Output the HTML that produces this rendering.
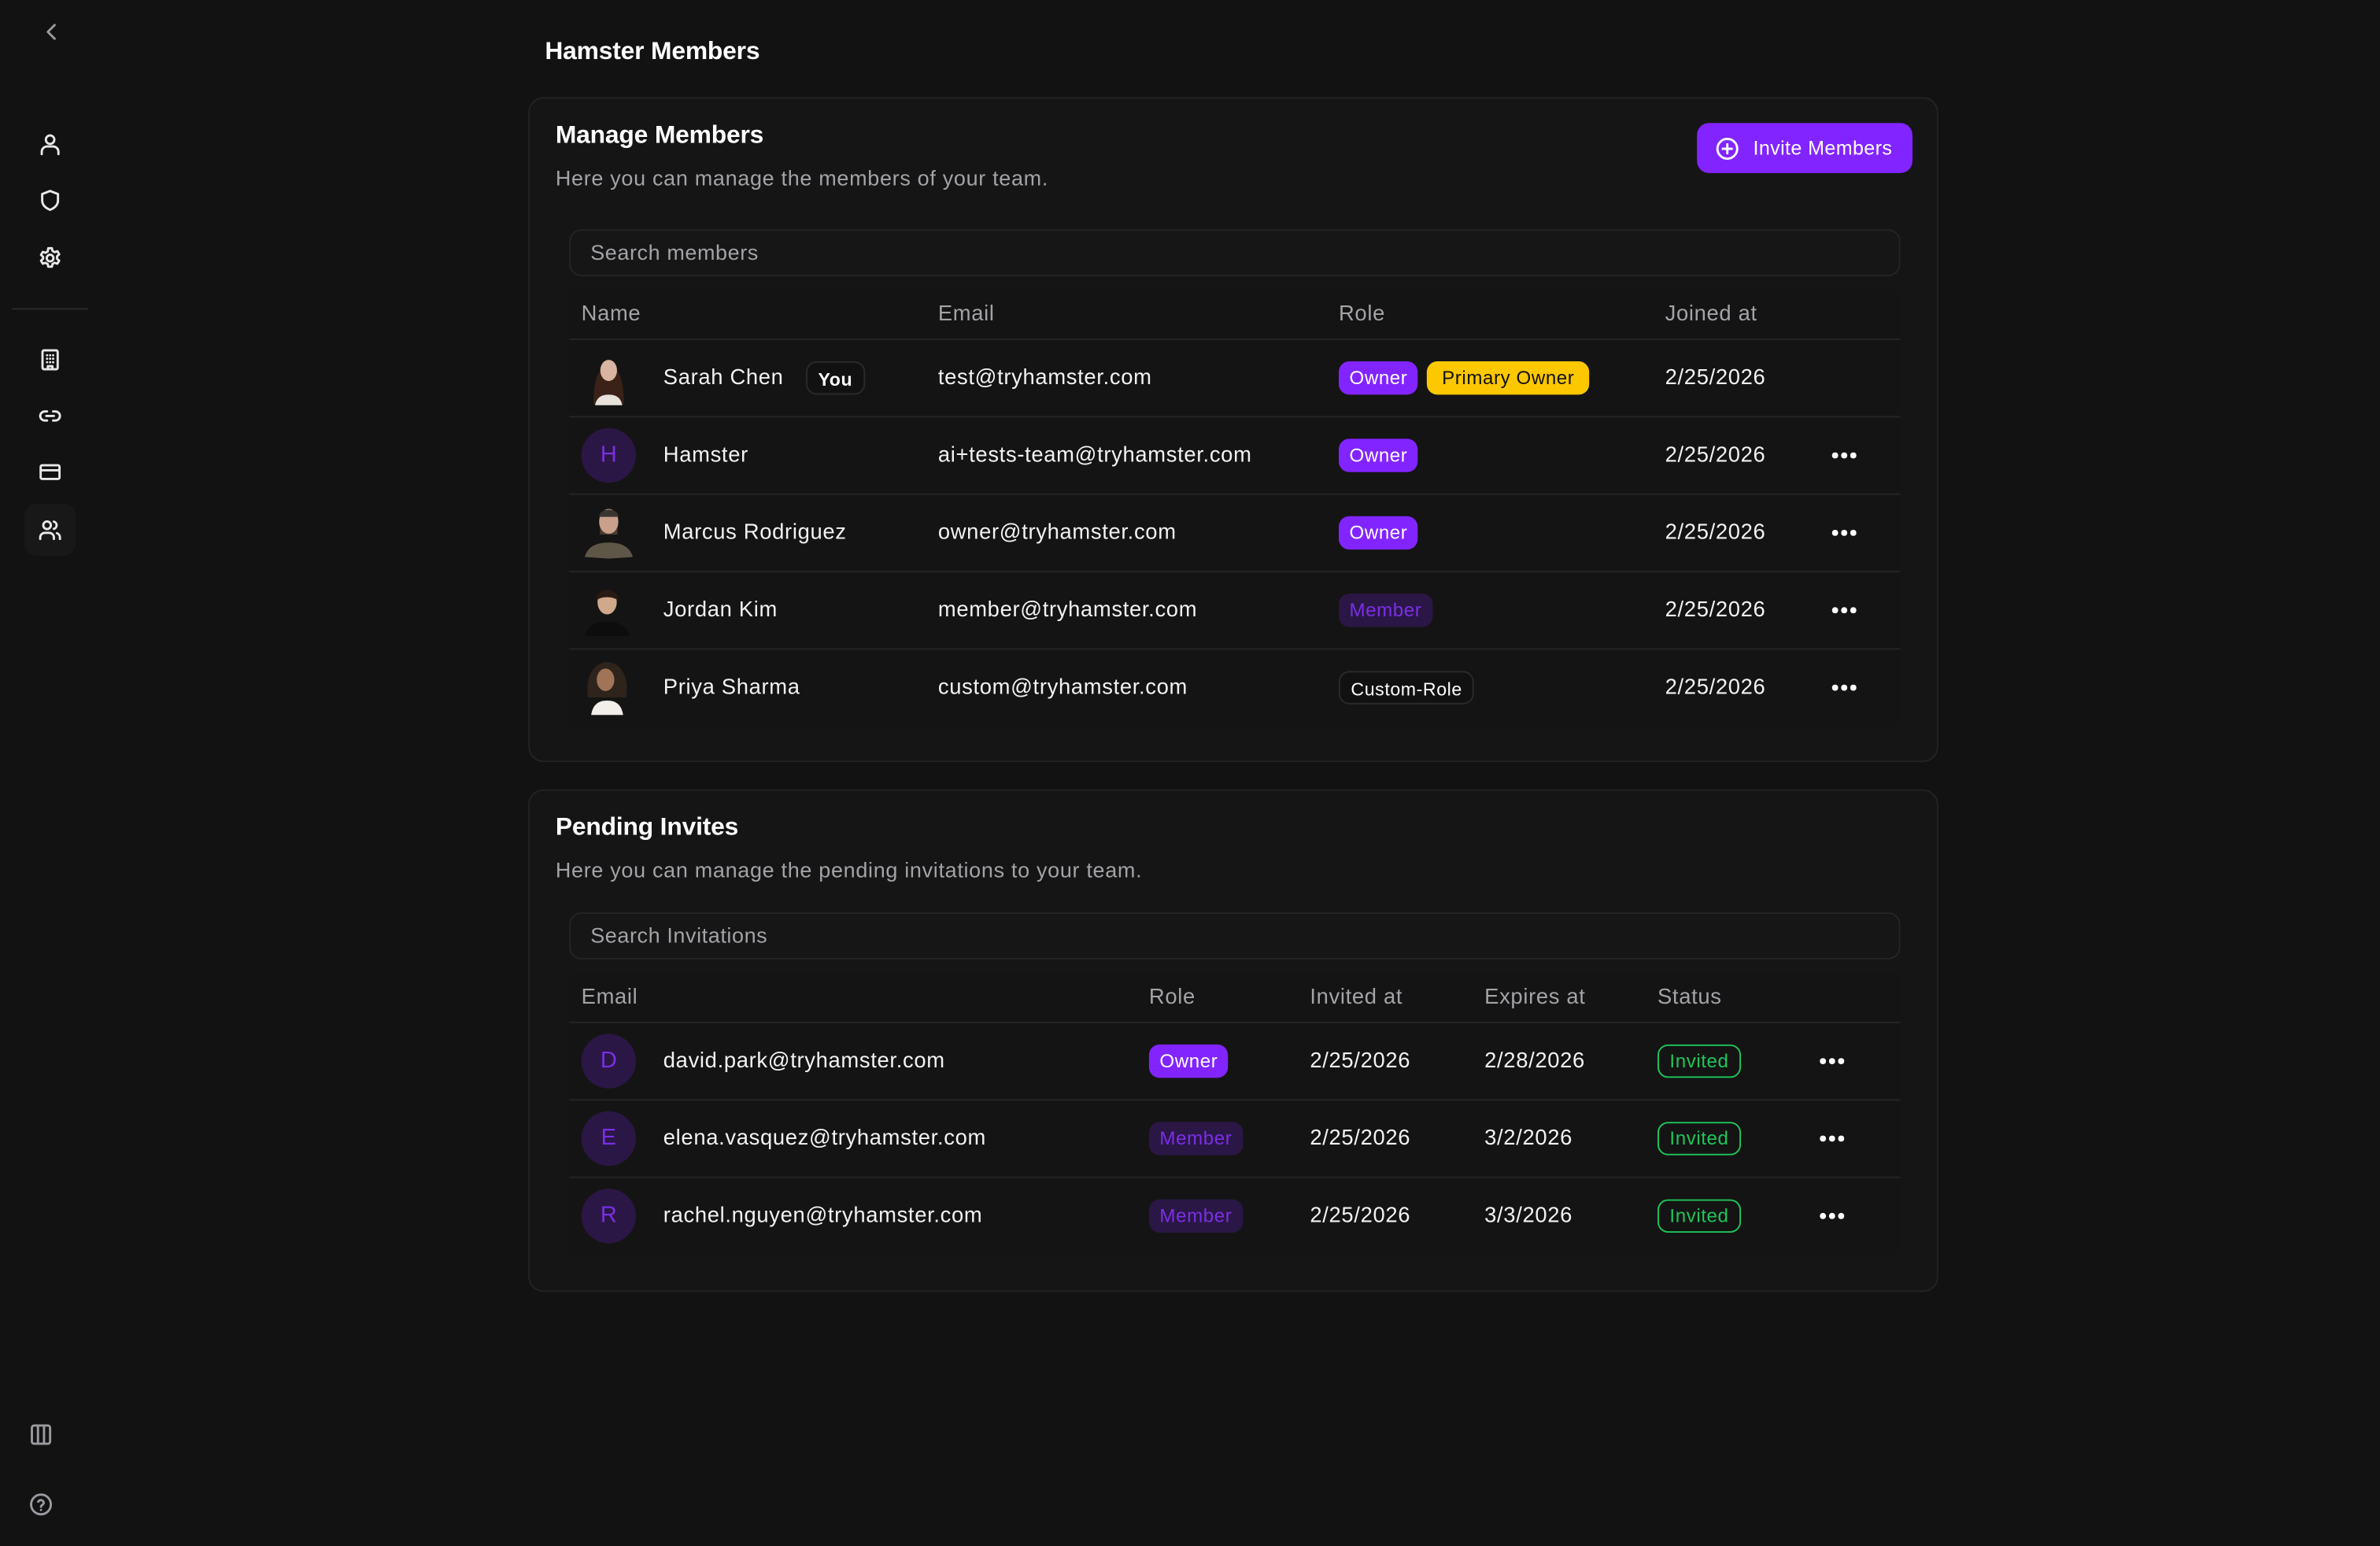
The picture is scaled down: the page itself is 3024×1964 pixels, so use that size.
<!DOCTYPE html>
<html><head><meta charset="utf-8">
<style>
*{box-sizing:border-box;margin:0;padding:0}
html,body{width:3024px;height:1964px;background:#121212;overflow:hidden}
#w{position:absolute;left:0;top:0;width:1568px;height:1018px;transform:scale(1.928571);transform-origin:0 0;font-family:"Liberation Sans",sans-serif;color:#f2f2f2}
.a{position:absolute}
.ic{position:absolute;width:16px;height:16px;fill:none;stroke:#e8e8e8;stroke-width:1.5;stroke-linecap:round;stroke-linejoin:round}
.card{position:absolute;left:348px;width:929px;background:#151515;border:1px solid #232323;border-radius:10px}
.h{position:absolute;font-size:16.5px;font-weight:bold;color:#fff;letter-spacing:-.1px}
.sub{position:absolute;font-size:14px;color:#a3a3a8;letter-spacing:.35px}
.search{position:absolute;left:26px;width:877px;height:31px;border:1px solid #242424;border-radius:8px;background:#161616;font-size:14px;color:#a3a3a8;padding-left:13px;line-height:29px;letter-spacing:.3px}
.tbl{position:absolute;left:26px;width:877px;background:#141414}
.row{position:absolute;left:0;width:877px;border-top:1px solid #252525}
.t{position:absolute;font-size:14.2px;white-space:nowrap;transform:translateY(-50%);letter-spacing:.35px}
.th{color:#a3a3a8}
.b{position:absolute;height:22px;border-radius:7px;font-size:12.5px;line-height:22px;padding:0 7px;transform:translateY(-50%);white-space:nowrap;letter-spacing:.3px}
.own{background:#8224ff;color:#fff}
.mem{background:#2a1745;color:#7c2ee6}
.av{position:absolute;width:36px;height:36px;border-radius:50%;background:#2a1745;color:#7c2ee6;font-size:15px;text-align:center;line-height:36px;transform:translateY(-50%)}
.dots{position:absolute;transform:translateY(-50%);width:16px;height:4px}
.dots i{position:absolute;top:0;width:3.6px;height:3.6px;border-radius:50%;background:#fff}
.inv{border:1px solid #1fc65a;color:#1fc65a;background:transparent;padding:0 7px;line-height:20px;height:22px}
</style></head><body><div id="w">
<svg class="ic" style="left:26px;top:13px;stroke:#9a9aa0" viewBox="0 0 16 16"><path d="M10 3.5 5.5 8 10 12.5"/></svg>
<svg class="ic" style="left:25px;top:87px" viewBox="0 0 16 16"><circle cx="8" cy="5" r="2.8"/><path d="M2.5 14.5v-1.5a3.5 3.5 0 0 1 3.5-3.5h4a3.5 3.5 0 0 1 3.5 3.5v1.5"/></svg>
<svg class="ic" style="left:25px;top:124px" viewBox="0 0 16 16"><path d="M8 1.8 2.8 3.8v4.2c0 3 2.3 5 5.2 6.2 2.9-1.2 5.2-3.2 5.2-6.2V3.8Z"/></svg>
<svg class="ic" style="left:25px;top:162px" viewBox="0 0 16 16"><circle cx="8" cy="8" r="2.2"/><path d="M6.8 1.5h2.4l.4 1.8 1.4.8 1.8-.6 1.2 2-1.4 1.3v1.600l1.4 1.3-1.2 2-1.8-.6-1.4.8-.4 1.8H6.8l-.4-1.8-1.4-.8-1.8.6-1.2-2 1.4-1.3V7.2L2 5.9l1.2-2 1.8.6 1.4-.8Z"/></svg>
<div class="a" style="left:8px;top:203px;width:50px;height:1px;background:#2c2c2c"></div>
<svg class="ic" style="left:25px;top:229px" viewBox="0 0 16 16"><rect x="3" y="1.8" width="10" height="12.4" rx="1"/><path d="M6 5h.01M8 5h.01M10 5h.01M6 7.3h.01M8 7.3h.01M10 7.3h.01M6 9.6h.01M8 9.6h.01M10 9.6h.01M6.5 14.2v-2h3v2"/></svg>
<svg class="ic" style="left:25px;top:266px" viewBox="0 0 16 16"><path d="M6 5H4.5a3 3 0 0 0 0 6H6M10 5h1.5a3 3 0 0 1 0 6H10M5.5 8h5"/></svg>
<svg class="ic" style="left:25px;top:303px" viewBox="0 0 16 16"><rect x="1.8" y="3.5" width="12.4" height="9" rx="1"/><path d="M1.8 6.8h12.4"/></svg>
<div class="a" style="left:16px;top:332px;width:34px;height:34px;border-radius:8px;background:#181818"></div>
<svg class="ic" style="left:25px;top:341px" viewBox="0 0 16 16"><circle cx="6" cy="5" r="2.5"/><path d="M1.5 14v-1a3 3 0 0 1 3-3h3a3 3 0 0 1 3 3v1M10.5 2.6a2.5 2.5 0 0 1 0 4.8M12.5 10.2a3 3 0 0 1 2 2.8v1"/></svg>
<svg class="ic" style="left:19px;top:937px;stroke:#9a9aa0" viewBox="0 0 16 16"><rect x="2" y="2" width="12" height="12" rx="1.5"/><path d="M6 2v12M10 2v12"/></svg>
<svg class="ic" style="left:19px;top:983px;stroke:#9a9aa0" viewBox="0 0 16 16"><circle cx="8" cy="8" r="6.5"/><path d="M6.2 6.2a1.9 1.9 0 0 1 3.6.7c0 1.2-1.8 1.6-1.8 2.6M8 11.6h.01"/></svg>

<div class="h" style="left:359px;top:25px">Hamster Members</div>

<div class="card" style="top:64px;height:438px">
 <div class="h" style="left:17px;top:15px">Manage Members</div>
 <div class="sub" style="left:17px;top:44px">Here you can manage the members of your team.</div>
 <div class="a" style="left:769px;top:16px;width:142px;height:33px;background:#8224ff;border-radius:8px;font-size:13px;color:#fff;line-height:33px;padding-left:37px;letter-spacing:.2px">Invite Members</div>
 <svg class="ic" style="left:781px;top:25px;stroke:#fff" viewBox="0 0 16 16"><circle cx="8" cy="8" r="6.5"/><path d="M8 5v6M5 8h6"/></svg>
 <div class="search" style="top:86px">Search members</div>
 <div class="tbl" style="top:126px;height:287px">
  <div class="t th" style="left:8px;top:16px">Name</div><div class="t th" style="left:243px;top:16px">Email</div><div class="t th" style="left:507px;top:16px">Role</div><div class="t th" style="left:722px;top:16px">Joined at</div>
  <div class="row" style="top:32px;height:51px"></div>
  <div class="row" style="top:83px;height:51px"></div>
  <div class="row" style="top:134px;height:51px"></div>
  <div class="row" style="top:185px;height:51px"></div>
  <div class="row" style="top:236px;height:51px"></div>
  <svg class="a" style="left:8px;top:40px" width="36" height="36" viewBox="0 0 36 36"><path d="M8 35c0-12 2-25 10-25s10 13 10 25Z" fill="#3a2218"/><ellipse cx="18" cy="13" rx="5.5" ry="7" fill="#d9b4a0"/><path d="M9 36c1-5 4-7 9-7s8 2 9 7Z" fill="#e8e2dc"/></svg>
  <div class="t" style="left:62px;top:58px">Sarah Chen</div>
  <div class="b" style="left:156px;top:58px;border:1px solid #2a2a2a;background:#111;color:#fff;font-weight:bold;font-size:12px">You</div>
  <div class="t" style="left:243px;top:58px">test@tryhamster.com</div>
  <div class="b own" style="left:507px;top:58px">Owner</div>
  <div class="b" style="left:565px;top:58px;background:#fdc800;color:#111;padding:0 10px">Primary Owner</div>
  <div class="t" style="left:722px;top:58px">2/25/2026</div>
  <div class="av" style="left:8px;top:109px">H</div>
  <div class="t" style="left:62px;top:109px">Hamster</div>
  <div class="t" style="left:243px;top:109px">ai+tests-team@tryhamster.com</div>
  <div class="b own" style="left:507px;top:109px">Owner</div>
  <div class="t" style="left:722px;top:109px">2/25/2026</div>
  <div class="dots" style="left:832px;top:109px"><i style="left:0"></i><i style="left:6px"></i><i style="left:12px"></i></div>
  <svg class="a" style="left:6px;top:140px" width="38" height="38" viewBox="0 0 36 36"><ellipse cx="19" cy="12" rx="6" ry="8" fill="#c9a08c"/><path d="M13 9c0-6 12-6 12 0" fill="#3b3530"/><path d="M13.5 15c2 6 9 6 11 0v5h-11Z" fill="#4a3a30"/><path d="M4 34c2-7 8-9 15-9s13 2 15 9l-15 1Z" fill="#5e5646"/></svg>
  <div class="t" style="left:62px;top:160px">Marcus Rodriguez</div>
  <div class="t" style="left:243px;top:160px">owner@tryhamster.com</div>
  <div class="b own" style="left:507px;top:160px">Owner</div>
  <div class="t" style="left:722px;top:160px">2/25/2026</div>
  <div class="dots" style="left:832px;top:160px"><i style="left:0"></i><i style="left:6px"></i><i style="left:12px"></i></div>
  <svg class="a" style="left:6px;top:191px" width="38" height="38" viewBox="0 0 36 36"><ellipse cx="18" cy="14" rx="6" ry="7.5" fill="#d0a88c"/><path d="M11 13c0-9 14-9 14 0-3-3-11-3-14 0Z" fill="#2a1a14"/><path d="M4 35c2-7 8-9 14-9s12 2 14 9Z" fill="#0d0d0d"/></svg>
  <div class="t" style="left:62px;top:211px">Jordan Kim</div>
  <div class="t" style="left:243px;top:211px">member@tryhamster.com</div>
  <div class="b mem" style="left:507px;top:211px">Member</div>
  <div class="t" style="left:722px;top:211px">2/25/2026</div>
  <div class="dots" style="left:832px;top:211px"><i style="left:0"></i><i style="left:6px"></i><i style="left:12px"></i></div>
  <svg class="a" style="left:6px;top:242px" width="38" height="38" viewBox="0 0 36 36"><path d="M6 25c-2-15 5-22 12-22s14 7 12 22Z" fill="#2e241c"/><ellipse cx="17" cy="14" rx="5.5" ry="7" fill="#a07458"/><path d="M8 36c1-6 4-9 10-9s9 3 10 9Z" fill="#f2eeea"/></svg>
  <div class="t" style="left:62px;top:262px">Priya Sharma</div>
  <div class="t" style="left:243px;top:262px">custom@tryhamster.com</div>
  <div class="b" style="left:507px;top:262px;border:1px solid #2a2a2a;background:#111;color:#fff;font-size:12px">Custom-Role</div>
  <div class="t" style="left:722px;top:262px">2/25/2026</div>
  <div class="dots" style="left:832px;top:262px"><i style="left:0"></i><i style="left:6px"></i><i style="left:12px"></i></div>
 </div>
</div>

<div class="card" style="top:520px;height:331px">
 <div class="h" style="left:17px;top:15px">Pending Invites</div>
 <div class="sub" style="left:17px;top:44px">Here you can manage the pending invitations to your team.</div>
 <div class="search" style="top:80px">Search Invitations</div>
 <div class="tbl" style="top:120px;height:185px">
  <div class="t th" style="left:8px;top:16px">Email</div><div class="t th" style="left:382px;top:16px">Role</div><div class="t th" style="left:488px;top:16px">Invited at</div><div class="t th" style="left:603px;top:16px">Expires at</div><div class="t th" style="left:717px;top:16px">Status</div>
  <div class="row" style="top:32px;height:51px"></div>
  <div class="row" style="top:83px;height:51px"></div>
  <div class="row" style="top:134px;height:51px"></div>
  <div class="av" style="left:8px;top:58px">D</div>
  <div class="t" style="left:62px;top:58px">david.park@tryhamster.com</div>
  <div class="b own" style="left:382px;top:58px">Owner</div>
  <div class="t" style="left:488px;top:58px">2/25/2026</div><div class="t" style="left:603px;top:58px">2/28/2026</div>
  <div class="b inv" style="left:717px;top:58px">Invited</div>
  <div class="dots" style="left:824px;top:58px"><i style="left:0"></i><i style="left:6px"></i><i style="left:12px"></i></div>
  <div class="av" style="left:8px;top:109px">E</div>
  <div class="t" style="left:62px;top:109px">elena.vasquez@tryhamster.com</div>
  <div class="b mem" style="left:382px;top:109px">Member</div>
  <div class="t" style="left:488px;top:109px">2/25/2026</div><div class="t" style="left:603px;top:109px">3/2/2026</div>
  <div class="b inv" style="left:717px;top:109px">Invited</div>
  <div class="dots" style="left:824px;top:109px"><i style="left:0"></i><i style="left:6px"></i><i style="left:12px"></i></div>
  <div class="av" style="left:8px;top:160px">R</div>
  <div class="t" style="left:62px;top:160px">rachel.nguyen@tryhamster.com</div>
  <div class="b mem" style="left:382px;top:160px">Member</div>
  <div class="t" style="left:488px;top:160px">2/25/2026</div><div class="t" style="left:603px;top:160px">3/3/2026</div>
  <div class="b inv" style="left:717px;top:160px">Invited</div>
  <div class="dots" style="left:824px;top:160px"><i style="left:0"></i><i style="left:6px"></i><i style="left:12px"></i></div>
 </div>
</div>
</div></body></html>
